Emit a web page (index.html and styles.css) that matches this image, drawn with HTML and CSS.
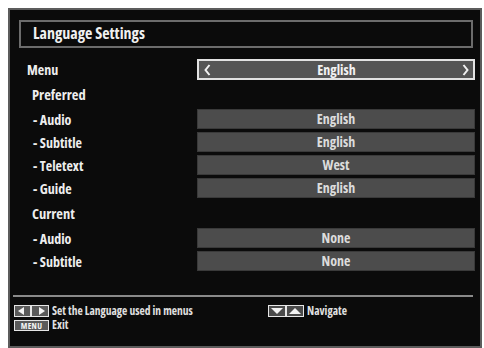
FILE: index.html
```html
<!DOCTYPE html>
<html lang="en">
<head>
    <meta charset="UTF-8">
    <meta name="viewport" content="width=device-width, initial-scale=1.0">
    <link rel="stylesheet" href="styles.css">
    <title>Language Settings</title>
</head>
<body>
    <div class="screen">
        <div class="title">Language Settings</div>

        <div class="settings">
            <div class="row row--menu">
                <div class="label label--top">Menu</div>
                <div class="value value--active">
                    <svg class="arrow" width="7" height="12" viewBox="0 0 7 12"><polyline points="5.5,1 1.5,6 5.5,11" fill="none" stroke="#f2f2f2" stroke-width="2"/></svg>
                    <span>English</span>
                    <svg class="arrow" width="7" height="12" viewBox="0 0 7 12"><polyline points="1.5,1 5.5,6 1.5,11" fill="none" stroke="#f2f2f2" stroke-width="2"/></svg>
                </div>
            </div>

            <div class="row row--group">
                <div class="label">Preferred</div>
            </div>
            <div class="row">
                <div class="label">- Audio</div>
                <div class="value">English</div>
            </div>
            <div class="row">
                <div class="label">- Subtitle</div>
                <div class="value">English</div>
            </div>
            <div class="row">
                <div class="label">- Teletext</div>
                <div class="value">West</div>
            </div>
            <div class="row">
                <div class="label">- Guide</div>
                <div class="value">English</div>
            </div>

            <div class="row row--group row--current">
                <div class="label">Current</div>
            </div>
            <div class="row">
                <div class="label">- Audio</div>
                <div class="value">None</div>
            </div>
            <div class="row">
                <div class="label">- Subtitle</div>
                <div class="value">None</div>
            </div>
        </div>

        <!-- Hints -->
        <div class="hints">
            <div class="hints__col">
                <div class="hint">
                    <span class="key key--lr">
                        <span class="tri tri--left"></span>
                        <span class="key__sep"></span>
                        <span class="tri tri--right"></span>
                    </span>
                    <span>Set the Language used in menus</span>
                </div>
                <div class="hint">
                    <span class="key key--menu">MENU</span>
                    <span>Exit</span>
                </div>
            </div>
            <div class="hints__col hints__col--nav">
                <div class="hint">
                    <span class="key key--ud">
                        <span class="key__half"><span class="tri tri--down"></span></span>
                        <span class="key__half"><span class="tri tri--up"></span></span>
                    </span>
                    <span>Navigate</span>
                </div>
            </div>
        </div>
    </div>
</body>
</html>
```

FILE: styles.css
```css
/* Page */
html, body {
    background-color: #ffffff;
}

body {
    margin: 8px 2px 0 8px;
    overflow: hidden;
    font-family: "Open Sans", "DejaVu Sans Condensed", sans-serif;
    font-stretch: 75%;
    font-weight: bold;
    color: #eeeeee;
}

/* TV screen */
.screen {
    box-sizing: border-box;
    height: 340px;
    background-color: #0b0b0b;
    border: 2px solid #5c5c5c;
    padding: 10px 7px 0 9px;
}

.title {
    box-sizing: border-box;
    height: 28px;
    border: 2px solid #6c6c6c;
    padding-left: 12px;
    font-size: 16px;
    line-height: 23px;
    color: #f0f0f0;
}

/* Settings list */
.settings {
    margin-top: 11px;
    margin-right: -2px;
}

.row {
    display: flex;
    align-items: center;
    height: 20px;
    margin-bottom: 3px;
}

.row--menu {
    height: 21px;
}

.row--group {
    height: 23px;
}

.row--current {
    height: 24px;
}

.label {
    flex: 1;
    padding-left: 14px;
    font-size: 14px;
}

.label--top {
    padding-left: 8px;
}

.row--group .label {
    padding-left: 13px;
    font-size: 14.5px;
}

.value {
    box-sizing: border-box;
    width: 278px;
    height: 20px;
    background-color: #4c4c4c;
    border: 1px solid #3a3a3a;
    text-align: center;
    font-size: 14px;
    line-height: 18px;
    color: #dcdcdc;
}

.value--active {
    display: flex;
    justify-content: space-between;
    align-items: center;
    height: 21px;
    padding: 0 4px 0 5px;
    background-color: #555555;
    border: 2px solid #e2e2e2;
    line-height: 17px;
    color: #f2f2f2;
}

.arrow {
    display: block;
}

/* Footer hints */
.hints {
    display: flex;
    margin: 24px 0 0 -6px;
    padding: 8px 0 0 1px;
    border-top: 2px solid #8a8a8a;
    width: 459px;
    font-size: 11.5px;
    color: #e0e0e0;
}

.hints__col {
    flex: 0 0 254px;
}

.hints__col--nav {
    flex: 1;
}

.hint {
    display: flex;
    align-items: center;
    gap: 3px;
    height: 12px;
    line-height: 12px;
    margin-bottom: 2px;
}

.key {
    box-sizing: border-box;
    display: inline-flex;
    align-items: center;
    justify-content: center;
    flex-shrink: 0;
    width: 35px;
    height: 12px;
    border: 1px solid #e6e6e6;
    background-color: #5a5a5a;
}

.key--menu {
    height: 11px;
    font-size: 8.5px;
    line-height: 9px;
    color: #f4f4f4;
    letter-spacing: 0.3px;
}

.key--lr {
    justify-content: space-around;
}

.key__sep {
    width: 2px;
    height: 10px;
    background-color: #e6e6e6;
}

.key--ud {
    width: 36px;
    background-color: #e6e6e6;
    gap: 2px;
}

.key__half {
    flex: 1;
    height: 10px;
    display: flex;
    align-items: center;
    justify-content: center;
    background-color: #4a4a4a;
}

.tri {
    width: 0;
    height: 0;
    border-style: solid;
}

.tri--left {
    border-width: 4px 6px 4px 0;
    border-color: transparent #f2f2f2 transparent transparent;
}

.tri--right {
    border-width: 4px 0 4px 6px;
    border-color: transparent transparent transparent #f2f2f2;
}

.tri--down {
    border-width: 6px 6px 0 6px;
    border-color: #f2f2f2 transparent transparent transparent;
}

.tri--up {
    border-width: 0 6px 6px 6px;
    border-color: transparent transparent #f2f2f2 transparent;
}
```
